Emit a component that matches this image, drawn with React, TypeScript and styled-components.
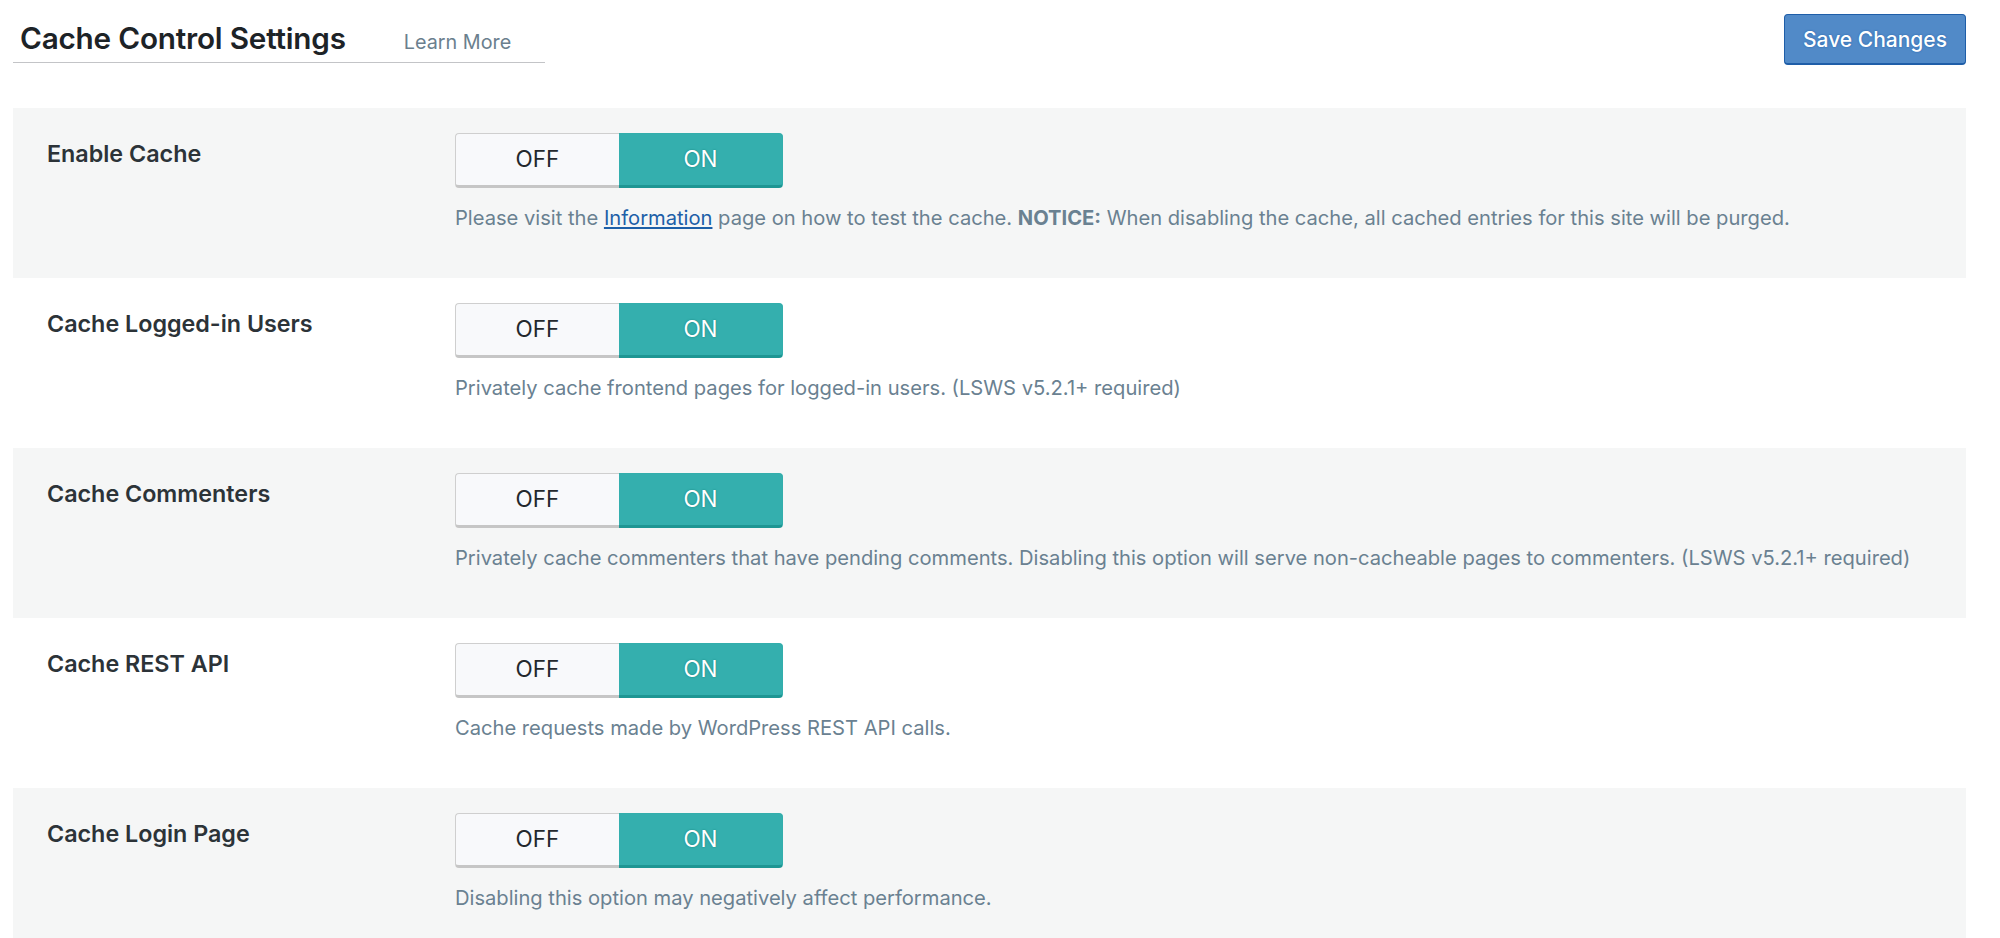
import React from 'react'
import styled, { createGlobalStyle } from 'styled-components'

const GlobalStyle = createGlobalStyle`
  body {
    margin: 0;
    background: #ffffff;
    font-family: Inter, "Noto Sans", sans-serif;
    -webkit-font-smoothing: antialiased;
  }
`

const Page = styled.div`
  width: 1953px;
  padding-left: 13px;
`

const Header = styled.header`
  display: flex;
  justify-content: space-between;
  align-items: flex-start;
  height: 108px;
`

const TitleBar = styled.div`
  display: flex;
  align-items: baseline;
  width: 532px;
  padding-top: 19px;
  padding-bottom: 5px;
  border-bottom: 1px solid #c3c4c7;
`

const Title = styled.h1`
  margin: 0 0 0 7px;
  font-size: 29.7px;
  line-height: 38px;
  font-weight: 600;
  color: #1d2327;
  letter-spacing: -0.2px;
`

const LearnMore = styled.a`
  margin-left: 58px;
  font-size: 19.8px;
  color: #6b7f8e;
  text-decoration: none;
`

const SaveButton = styled.button`
  margin-top: 14px;
  height: 51px;
  width: 182px;
  padding: 0;
  border: 1px solid #1f5ea8;
  border-bottom-width: 2px;
  border-radius: 4px;
  background: #518ac8;
  color: #ffffff;
  font-family: inherit;
  font-size: 21px;
  font-weight: 500;
  text-shadow: 0 0 2px #1f5ea8;
`

const Row = styled.div<{ $shaded: boolean }>`
  display: grid;
  grid-template-columns: 408px 1fr;
  box-sizing: border-box;
  height: 170px;
  padding: 25px 0 0 34px;
  background: ${(p) => (p.$shaded ? '#f5f6f6' : '#ffffff')};
`

const Label = styled.div`
  padding-top: 6px;
  font-size: 23.3px;
  line-height: 30px;
  font-weight: 600;
  color: #2c3338;
`

const Field = styled.div`
  display: flex;
  flex-direction: column;
  align-items: flex-start;
`

const Toggle = styled.div`
  display: flex;
  width: 328px;
  height: 55px;
`

const ToggleOption = styled.div<{ $active: boolean }>`
  flex: 1;
  display: flex;
  align-items: center;
  justify-content: center;
  box-sizing: border-box;
  padding-bottom: 2px;
  font-size: 22.5px;
  border: 1px solid ${(p) => (p.$active ? '#33aeac' : '#cfcfcf')};
  border-bottom: 3px solid ${(p) => (p.$active ? '#1e9693' : '#c6c6c6')};
  background: ${(p) => (p.$active ? '#34afae' : '#f8f9fb')};
  color: ${(p) => (p.$active ? '#ffffff' : '#23282d')};
  text-shadow: ${(p) => (p.$active ? '0 0 2px #16807e' : 'none')};
  border-radius: ${(p) => (p.$active ? '0 4px 4px 0' : '4px 0 0 4px')};
  ${(p) => (p.$active ? 'border-left: none;' : 'border-right: none;')}
`

const Desc = styled.div`
  margin-top: 16px;
  font-size: 20.15px;
  line-height: 28px;
  color: #6a8191;

  a {
    color: #1d5fa8;
    text-decoration: underline;
  }

  strong {
    font-weight: 700;
  }
`

type SettingProps = {
  label: string
  shaded: boolean
  children: React.ReactNode
}

const Setting = ({ label, shaded, children }: SettingProps) => (
  <Row $shaded={shaded}>
    <Label>{label}</Label>
    <Field>
      <Toggle>
        <ToggleOption $active={false}>OFF</ToggleOption>
        <ToggleOption $active>ON</ToggleOption>
      </Toggle>
      <Desc>{children}</Desc>
    </Field>
  </Row>
)

export default function App() {
  return (
    <Page>
      <GlobalStyle />
      <Header>
        <TitleBar>
          <Title>Cache Control Settings</Title>
          <LearnMore href="#">Learn More</LearnMore>
        </TitleBar>
        <SaveButton>Save Changes</SaveButton>
      </Header>
      <Setting label="Enable Cache" shaded>
        Please visit the <a href="#">Information</a> page on how to test the cache.{' '}
        <strong>NOTICE:</strong> When disabling the cache, all cached entries for this site will be
        purged.
      </Setting>
      <Setting label="Cache Logged-in Users" shaded={false}>
        Privately cache frontend pages for logged-in users. (LSWS v5.2.1+ required)
      </Setting>
      <Setting label="Cache Commenters" shaded>
        Privately cache commenters that have pending comments. Disabling this option will serve
        non-cacheable pages to commenters. (LSWS v5.2.1+ required)
      </Setting>
      <Setting label="Cache REST API" shaded={false}>
        Cache requests made by WordPress REST API calls.
      </Setting>
      <Setting label="Cache Login Page" shaded>
        Disabling this option may negatively affect performance.
      </Setting>
    </Page>
  )
}
